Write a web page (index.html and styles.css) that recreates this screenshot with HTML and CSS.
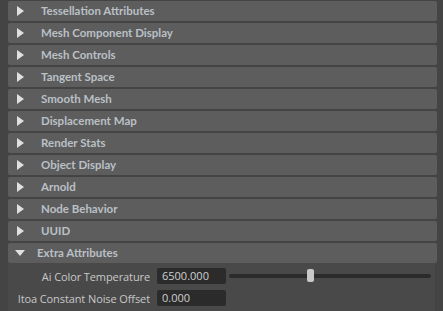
FILE: index.html
```html
<!DOCTYPE html>
<html>
<head>
<meta charset="utf-8">
<link rel="stylesheet" href="styles.css">
</head>
<body>
<div class="editor">
  <div class="section"><span class="tri right"></span><span class="title">Tessellation Attributes</span></div>
  <div class="section"><span class="tri right"></span><span class="title">Mesh Component Display</span></div>
  <div class="section"><span class="tri right"></span><span class="title">Mesh Controls</span></div>
  <div class="section"><span class="tri right"></span><span class="title">Tangent Space</span></div>
  <div class="section"><span class="tri right"></span><span class="title">Smooth Mesh</span></div>
  <div class="section"><span class="tri right"></span><span class="title">Displacement Map</span></div>
  <div class="section"><span class="tri right"></span><span class="title">Render Stats</span></div>
  <div class="section"><span class="tri right"></span><span class="title">Object Display</span></div>
  <div class="section"><span class="tri right"></span><span class="title">Arnold</span></div>
  <div class="section"><span class="tri right"></span><span class="title">Node Behavior</span></div>
  <div class="section"><span class="tri right"></span><span class="title">UUID</span></div>
  <div class="section open"><span class="tri down"></span><span class="title">Extra Attributes</span></div>
  <div class="body">
    <div class="row">
      <span class="label">Ai Color Temperature</span>
      <span class="field">6500.000</span>
      <div class="slider"><div class="track"></div><div class="thumb" style="left: 38.5%"></div></div>
    </div>
    <div class="row">
      <span class="label">Itoa Constant Noise Offset</span>
      <span class="field">0.000</span>
    </div>
  </div>
</div>
</body>
</html>
```
FILE: styles.css
```css
html, body {
  margin: 0;
  padding: 0;
  background: #444444;
  width: 443px;
  height: 311px;
  overflow: hidden;
}
.editor {
  display: flex;
  flex-direction: column;
  gap: 2px;
  padding: 1px 6px 0 8px;
  font-family: "Open Sans", "Liberation Sans", sans-serif;
}
.section {
  height: 20px;
  box-sizing: border-box;
  background: #5d5d5d;
  border-radius: 2px;
  display: flex;
  align-items: center;
  color: #bac0c6;
  font-family: "Lato", "Open Sans", sans-serif;
  font-weight: 700;
  font-size: 11.5px;
  line-height: 20px;
}
.tri {
  width: 0;
  height: 0;
  display: inline-block;
}
.tri.right {
  margin-left: 9px;
  margin-right: 17px;
  border-top: 5px solid transparent;
  border-bottom: 5px solid transparent;
  border-left: 7px solid #e0e0e0;
}
.tri.down {
  margin-left: 7px;
  margin-right: 12px;
  border-left: 5px solid transparent;
  border-right: 5px solid transparent;
  border-top: 6px solid #e0e0e0;
}
.body {
  margin-top: -2px;
  margin-right: 2px;
  background: #494949;
  padding: 5px 0 6px 0;
  display: flex;
  flex-direction: column;
  gap: 6px;
}
.row {
  display: flex;
  align-items: center;
  height: 16px;
}
.label {
  width: 142px;
  text-align: right;
  color: #c8c8c8;
  font-size: 11px;
  letter-spacing: -0.1px;
  white-space: nowrap;
  overflow: hidden;
  flex: none;
}
.field {
  margin-left: 7px;
  width: 69px;
  height: 16px;
  box-sizing: border-box;
  background: #2b2b2b;
  border-radius: 2px;
  color: #d0d0d0;
  font-size: 11px;
  line-height: 16px;
  padding-left: 5px;
  flex: none;
}
.slider {
  position: relative;
  margin-left: 3px;
  width: 202px;
  height: 14px;
  display: flex;
  align-items: center;
}
.track {
  width: 100%;
  height: 4px;
  border-radius: 2px;
  background: #2b2b2b;
}
.thumb {
  position: absolute;
  top: 0;
  width: 7px;
  height: 13px;
  border-radius: 2px;
  background: #c8c8c8;
}
```
